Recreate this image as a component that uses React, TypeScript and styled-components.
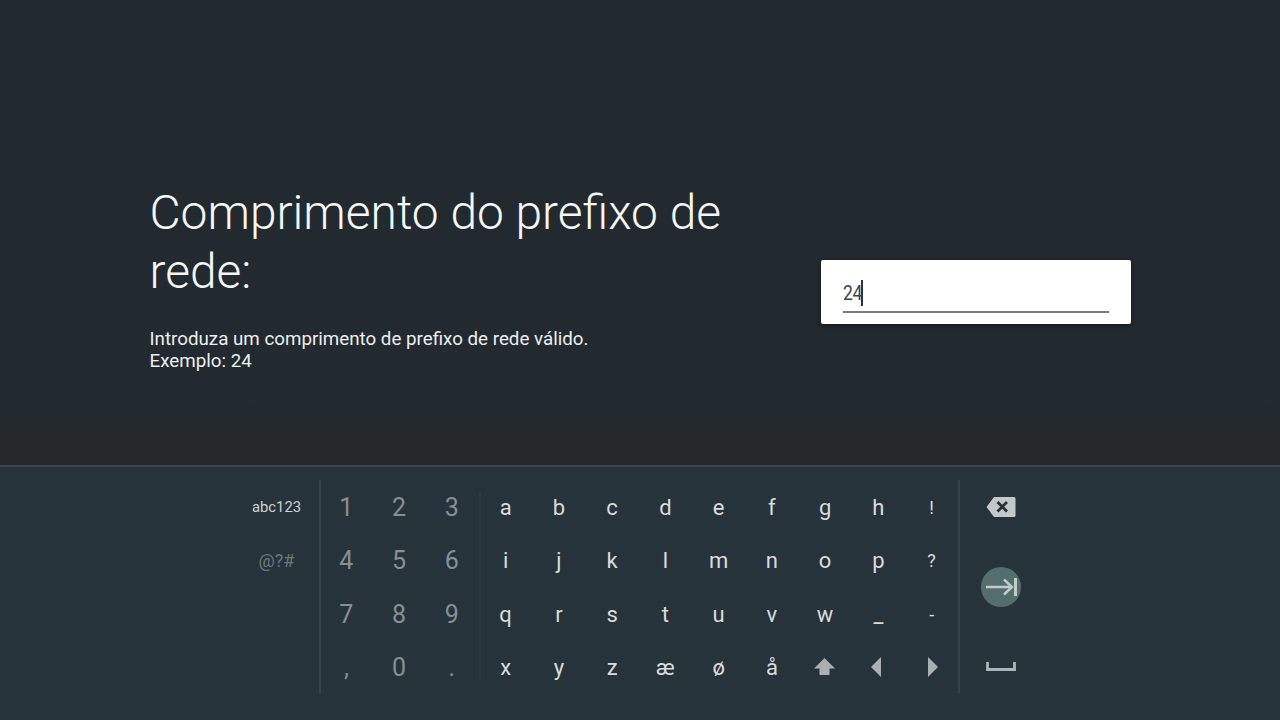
import styled, { createGlobalStyle } from 'styled-components';

const GlobalStyle = createGlobalStyle`
  html, body {
    margin: 0;
    padding: 0;
    width: 1280px;
    height: 720px;
    overflow: hidden;
    background: #222a30;
    font-family: Roboto, "Liberation Sans", sans-serif;
  }
`;

const NUMBERS = ['1', '2', '3', '4', '5', '6', '7', '8', '9', ',', '0', '.'];
const LETTERS = [
  'a', 'b', 'c', 'd', 'e', 'f', 'g', 'h', '!',
  'i', 'j', 'k', 'l', 'm', 'n', 'o', 'p', '?',
  'q', 'r', 's', 't', 'u', 'v', 'w', '_', '-',
  'x', 'y', 'z', 'æ', 'ø', 'å',
];

function BackspaceIcon() {
  return (
    <svg width='30' height='22' viewBox='0 0 30 22'>
      <path d='M8 1h20a1.500 1.500 0 0 1 1.500 1.500v17a1.500 1.500 0 0 1-1.500 1.500H8L.5 11z' fill='#c3c8ca' />
      <path d='M11.500 6l9.500 9.500M21 6l-9.500 9.500' stroke='#263238' strokeWidth='2.800' fill='none' />
    </svg>
  );
}

function NextIcon() {
  return (
    <svg width='32' height='18' viewBox='0 0 32 18'>
      <path d='M1 9h26M19 1.500L27 9l-8 7.500' stroke='#c0cccb' strokeWidth='2.400' fill='none' />
      <path d='M30.500 0v18' stroke='#c0cccb' strokeWidth='3' fill='none' />
    </svg>
  );
}

function SpaceIcon() {
  return (
    <svg width='30' height='9' viewBox='0 0 30 9'>
      <path d='M1.500 0v7.500h27V0' stroke='#aeb5b8' strokeWidth='2.800' fill='none' />
    </svg>
  );
}

function ShiftIcon() {
  return (
    <svg width='22' height='18' viewBox='0 0 22 18'>
      <path d='M10.500 0L21 10.500h-5.500V17h-10v-6.500H0z' fill='#a9afb2' />
    </svg>
  );
}

function LeftArrowIcon() {
  return (
    <svg width='14' height='20' viewBox='0 0 14 20'>
      <path d='M10 0L0 10l10 10z' fill='#a9afb2' />
    </svg>
  );
}

function RightArrowIcon() {
  return (
    <svg width='12' height='20' viewBox='0 0 12 20'>
      <path d='M2 0l10 10L2 20z' fill='#a9afb2' />
    </svg>
  );
}

export default function App() {
  return (
    <Page>
      <GlobalStyle />
      <Content>
        <Copy>
          <Title>Comprimento do prefixo de rede:</Title>
          <Description>
            Introduza um comprimento de prefixo de rede válido.
            <br />
            Exemplo: 24
          </Description>
        </Copy>
        <InputCard>
          <InputLine>
            <InputText>24</InputText>
            <Caret />
          </InputLine>
        </InputCard>
      </Content>
      <Keyboard>
        <ModeColumn>
          <ModeKey>abc123</ModeKey>
          <ModeKey $dim>@?#</ModeKey>
        </ModeColumn>
        <NumberGrid>
          {NUMBERS.map((key) => (
            <NumberKey key={key}>{key}</NumberKey>
          ))}
        </NumberGrid>
        <LetterGrid>
          <LetterDivider />
          {LETTERS.map((key) => (
            <LetterKey key={key} $symbol={key === '!' || key === '?' || key === '-'}>
              {key}
            </LetterKey>
          ))}
          <IconKey>
            <ShiftIcon />
          </IconKey>
          <IconKey>
            <LeftArrowIcon />
          </IconKey>
          <IconKey>
            <RightArrowIcon />
          </IconKey>
        </LetterGrid>
        <ActionColumn>
          <IconKey>
            <BackspaceIcon />
          </IconKey>
          <IconKey>
            <NextButton>
              <NextIcon />
            </NextButton>
          </IconKey>
          <IconKey>
            <SpaceIcon />
          </IconKey>
        </ActionColumn>
      </Keyboard>
    </Page>
  );
}

const Page = styled.div`
  display: flex;
  flex-direction: column;
  width: 1280px;
  height: 720px;
`;

const Content = styled.main`
  display: flex;
  align-items: center;
  height: 465px;
  box-sizing: border-box;
  padding: 119px 149px 0 150px;
  background: linear-gradient(180deg, #222a30 0%, #222a30 85%, #24282b 95%);
`;

const Copy = styled.div`
  width: 671px;
  margin-bottom: 30px;
`;

const Title = styled.h1`
  margin: 1px 0 0 -0.5px;
  width: 600px;
  color: #f5f7f7;
  font-size: 47.900px;
  font-weight: 300;
  line-height: 59px;
`;

const Description = styled.p`
  margin: 26px 0 0 -0.5px;
  color: #eceeef;
  font-size: 18.750px;
  line-height: 22px;
`;

const InputCard = styled.div`
  display: flex;
  align-items: flex-end;
  box-sizing: border-box;
  width: 310px;
  height: 64px;
  padding: 0 22px 11px;
  background: #ffffff;
  border-radius: 2px;
  box-shadow: 0 2px 5px rgba(0, 0, 0, 0.45);
`;

const InputLine = styled.div`
  display: flex;
  align-items: center;
  width: 100%;
  height: 36px;
  box-sizing: border-box;
  padding-bottom: 2px;
  border-bottom: 2px solid #7a7a7a;
`;

const InputText = styled.span`
  color: #424242;
  font-size: 20px;
  letter-spacing: -0.5px;
  transform: scaleX(0.88);
  transform-origin: left center;
  margin-right: -3px;
`;

const Caret = styled.span`
  width: 1.500px;
  height: 26px;
  background: #333333;
`;

const Keyboard = styled.section`
  display: flex;
  flex: 1;
  box-sizing: border-box;
  padding-top: 13px;
  background: #27333a;
  border-top: 2px solid #39444b;
`;

const ModeColumn = styled.div`
  display: flex;
  flex-direction: column;
  width: 321px;
  height: 213px;
  box-sizing: border-box;
  padding-right: 18px;
  align-items: flex-end;
  border-right: 2px solid #37434a;
`;

const ModeKey = styled.div<{ $dim?: boolean }>`
  display: flex;
  align-items: center;
  justify-content: center;
  box-sizing: border-box;
  padding-top: ${(p) => (p.$dim ? 2 : 1)}px;
  width: ${(p) => (p.$dim ? 45 : 49)}px;
  height: 53.330px;
  margin-right: ${(p) => (p.$dim ? 2 : 0)}px;
  color: ${(p) => (p.$dim ? '#6d787d' : '#ced2d4')};
  font-size: ${(p) => (p.$dim ? 18 : 14.800)}px;
`;

const NumberGrid = styled.div`
  display: grid;
  grid-template-columns: repeat(3, 52.750px);
  grid-auto-rows: 53.330px;
  width: 158px;
  height: 213px;
  transform: translateX(-1px);
`;

const Key = styled.div`
  display: flex;
  align-items: center;
  justify-content: center;
`;

const NumberKey = styled(Key)`
  box-sizing: border-box;
  padding-top: 2px;
  color: #858f94;
  font-size: 25px;
`;

const LetterGrid = styled.div`
  display: grid;
  grid-template-columns: repeat(9, 53.250px);
  grid-auto-rows: 53.330px;
  box-sizing: border-box;
  width: 480px;
  height: 213px;
  position: relative;
`;

const LetterDivider = styled.span`
  position: absolute;
  left: 0;
  top: 13px;
  bottom: 13px;
  width: 2px;
  background: #2f3a40;
`;

const LetterKey = styled(Key)<{ $symbol?: boolean }>`
  box-sizing: border-box;
  padding-top: 2px;
  color: #d8dcdd;
  font-size: ${(p) => (p.$symbol ? 18 : 22)}px;
`;

const IconKey = styled(Key)`
  min-height: 53.330px;
`;

const ActionColumn = styled.div`
  display: grid;
  grid-template-rows: 53.330px 106.670px 53.330px;
  width: 84px;
  height: 213px;
  box-sizing: border-box;
  border-left: 2px solid #37434a;
  margin-left: -1px;
`;

const NextButton = styled.div`
  display: flex;
  align-items: center;
  justify-content: center;
  width: 40px;
  height: 40px;
  border-radius: 50%;
  background: #546e6e;
`;
